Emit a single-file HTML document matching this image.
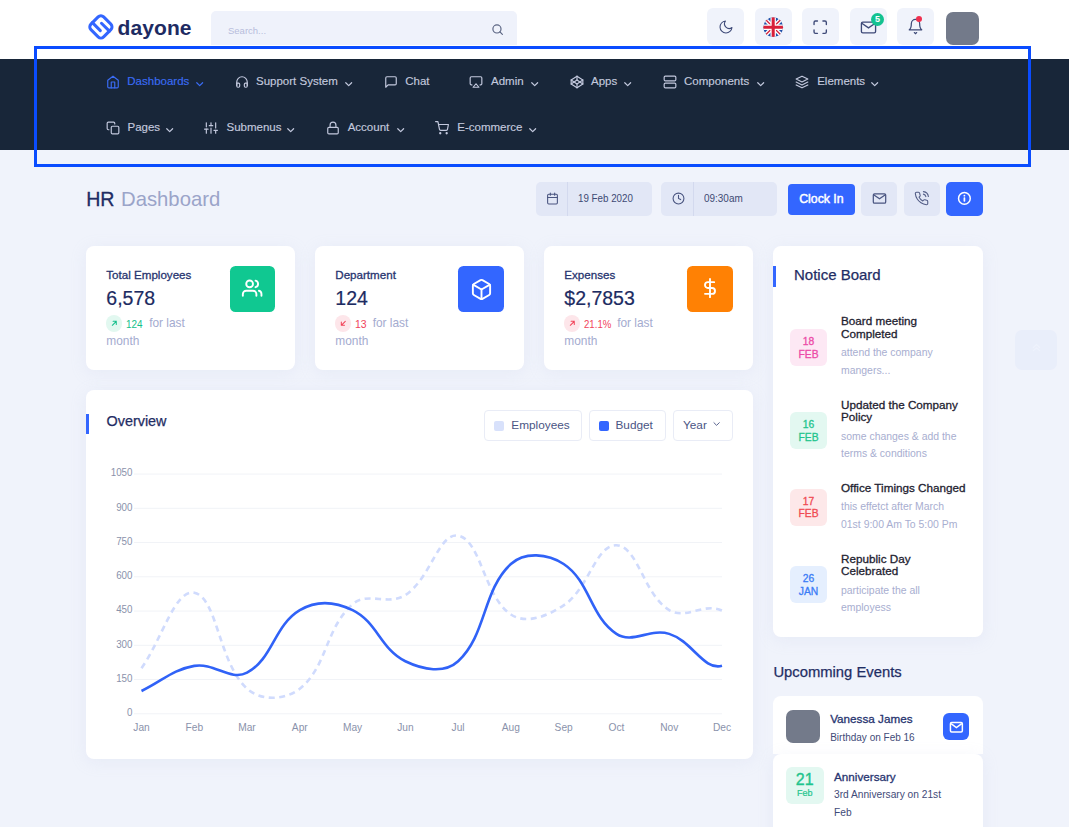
<!DOCTYPE html>
<html><head><meta charset="utf-8"><title>dayone HR Dashboard</title>
<style>
html,body{margin:0;padding:0}
body{width:1069px;height:827px;overflow:hidden;position:relative;background:#f0f3fb;font-family:"Liberation Sans",sans-serif}
.t{position:absolute;white-space:nowrap;line-height:1;font-family:"Liberation Sans",sans-serif}
.i{position:absolute;overflow:visible}
</style></head><body>
<div class="t" style="left:86.2px;top:189.6px;font-size:19.6px;color:#1f2d64;font-weight:normal;-webkit-text-stroke:0.3px #1f2d64;">HR</div>
<div class="t" style="left:121.0px;top:189.0px;font-size:20.3px;color:#9ba4c9;font-weight:normal;">Dashboard</div>
<div style="position:absolute;left:536px;top:182px;width:116px;height:34px;background:#e2e7f6;border-radius:5px"></div>
<div style="position:absolute;left:567px;top:182px;width:1px;height:34px;background:#d3d9ee"></div>
<svg class="i" style="left:546.0px;top:192.0px;width:13px;height:13px;" viewBox="0 0 24 24"><g fill="none" stroke="#4a5580" stroke-width="2" stroke-linecap="round"><rect x="3" y="4" width="18" height="18" rx="2"/><line x1="16" y1="2" x2="16" y2="6"/><line x1="8" y1="2" x2="8" y2="6"/><line x1="3" y1="10" x2="21" y2="10"/></g></svg>
<div class="t" style="left:577.5px;top:192.9px;font-size:11.3px;color:#3e4a74;font-weight:normal;transform:scaleX(0.865);transform-origin:0 0;">19 Feb 2020</div>
<div style="position:absolute;left:661px;top:182px;width:116px;height:34px;background:#e2e7f6;border-radius:5px"></div>
<div style="position:absolute;left:693px;top:182px;width:1px;height:34px;background:#d3d9ee"></div>
<svg class="i" style="left:671.5px;top:192.0px;width:13px;height:13px;" viewBox="0 0 24 24"><g fill="none" stroke="#4a5580" stroke-width="2" stroke-linecap="round"><circle cx="12" cy="12" r="10"/><polyline points="12 6 12 12 16 14"/></g></svg>
<div class="t" style="left:703.8px;top:192.9px;font-size:11.3px;color:#3e4a74;font-weight:normal;transform:scaleX(0.88);transform-origin:0 0;">09:30am</div>
<div style="position:absolute;left:788px;top:184px;width:67px;height:30.7px;background:#3366ff;border-radius:4px"></div>
<div class="t" style="left:799.2px;top:192.5px;font-size:12.3px;color:#ffffff;font-weight:normal;-webkit-text-stroke:0.45px #fff;">Clock In</div>
<div style="position:absolute;left:861px;top:182px;width:36px;height:34px;background:#e2e7f6;border-radius:5px"></div>
<svg class="i" style="left:871.5px;top:191.7px;width:15px;height:13px;" viewBox="0 0 24 21"><rect x="2" y="3" width="20" height="15" rx="2" fill="none" stroke="#4a5580" stroke-width="2"/><path d="M2.5 4.5 L12 11 L21.5 4.5" fill="none" stroke="#4a5580" stroke-width="2"/></svg>
<div style="position:absolute;left:903.5px;top:182px;width:36px;height:34px;background:#e2e7f6;border-radius:5px"></div>
<svg class="i" style="left:914.0px;top:191.0px;width:15px;height:15px;" viewBox="0 0 24 24"><g fill="none" stroke="#525c85" stroke-width="1.7" stroke-linecap="round" stroke-linejoin="round"><path d="M15.05 5A5 5 0 0 1 19 8.95M15.05 1A9 9 0 0 1 23 8.94m-1 7.98v3a2 2 0 0 1-2.18 2 19.79 19.79 0 0 1-8.63-3.07 19.5 19.5 0 0 1-6-6 19.79 19.79 0 0 1-3.07-8.67A2 2 0 0 1 4.11 2h3a2 2 0 0 1 2 1.72 12.84 12.84 0 0 0 .7 2.81 2 2 0 0 1-.45 2.11L8.09 9.91a16 16 0 0 0 6 6l1.27-1.27a2 2 0 0 1 2.11-.45 12.84 12.84 0 0 0 2.81.7A2 2 0 0 1 22 16.92z"/></g></svg>
<div style="position:absolute;left:946px;top:182px;width:36.5px;height:34px;background:#3366ff;border-radius:5px"></div>
<svg class="i" style="left:956.6px;top:191.0px;width:14.8px;height:14.8px;" viewBox="0 0 24 24"><circle cx="12" cy="12" r="9.5" fill="none" stroke="#fff" stroke-width="2.4"/><circle cx="12" cy="7.6" r="1.5" fill="#fff"/><rect x="10.6" y="10.3" width="2.8" height="7" rx="1" fill="#fff"/></svg>
<div style="position:absolute;left:1015px;top:330px;width:42px;height:40px;background:#e9eefa;border-radius:7px"></div>
<svg class="i" style="left:1031.5px;top:342.5px;width:9px;height:9px;" viewBox="0 0 10 10"><path d="M1.5 5 L5 1.8 L8.5 5 M1.5 8.5 L5 5.3 L8.5 8.5" fill="none" stroke="#eef2fc" stroke-width="1.3" stroke-linecap="round"/></svg>
<div style="position:absolute;left:86px;top:246px;width:209px;height:124px;background:#fff;border-radius:8px;box-shadow:0 3px 16px rgba(185,195,228,0.17)"></div>
<div class="t" style="left:106.3px;top:268.9px;font-size:11.6px;color:#283570;font-weight:normal;-webkit-text-stroke:0.3px #283570;">Total Employees</div>
<div class="t" style="left:106.3px;top:288.5px;font-size:19.5px;color:#1c2b62;font-weight:normal;-webkit-text-stroke:0.2px #1c2b62;">6,578</div>
<div style="position:absolute;left:229.6px;top:266px;width:45.8px;height:45.8px;background:#10c891;border-radius:5.5px"></div>
<svg class="i" style="left:242.3px;top:278.1px;width:20.3px;height:20.3px;" viewBox="0 0 24 24"><g fill="none" stroke="#fff" stroke-width="2.25" stroke-linecap="round" stroke-linejoin="round"><path d="M17 21v-2a4 4 0 0 0-4-4H5a4 4 0 0 0-4 4v2"/><circle cx="9" cy="7" r="4"/><path d="M23 21v-2a4 4 0 0 0-3-3.87"/><path d="M16 3.13a4 4 0 0 1 0 7.75"/></g></svg>
<div style="position:absolute;left:105.6px;top:315.3px;width:16.4px;height:16.4px;background:#e2f8f0;border-radius:50%"></div>
<svg class="i" style="left:110.6px;top:320.3px;width:6.6px;height:6.6px;" viewBox="0 0 10 10"><path d="M2 8 L8 2 M3.2 2 H8 V6.8" fill="none" stroke="#13bf8a" stroke-width="1.55" stroke-linecap="round"/></svg>
<div class="t" style="left:126.2px;top:318.8px;font-size:11px;color:#13bf8a;font-weight:normal;transform:scaleX(0.9);transform-origin:0 0;">124</div>
<div class="t" style="left:149.2px;top:317.9px;font-size:11.9px;color:#a4abcf;font-weight:normal;">for last</div>
<div class="t" style="left:106.3px;top:335.9px;font-size:11.9px;color:#a4abcf;font-weight:normal;">month</div>
<div style="position:absolute;left:315px;top:246px;width:209px;height:124px;background:#fff;border-radius:8px;box-shadow:0 3px 16px rgba(185,195,228,0.17)"></div>
<div class="t" style="left:335.3px;top:268.9px;font-size:11.6px;color:#283570;font-weight:normal;-webkit-text-stroke:0.3px #283570;">Department</div>
<div class="t" style="left:335.3px;top:288.5px;font-size:19.5px;color:#1c2b62;font-weight:normal;-webkit-text-stroke:0.2px #1c2b62;">124</div>
<div style="position:absolute;left:458.4px;top:266px;width:45.8px;height:45.8px;background:#3366ff;border-radius:5.5px"></div>
<svg class="i" style="left:469.8px;top:277.5px;width:23px;height:23px;" viewBox="0 0 24 24"><g fill="none" stroke="#fff" stroke-width="1.98" stroke-linecap="round" stroke-linejoin="round"><path d="M21 16V8a2 2 0 0 0-1-1.73l-7-4a2 2 0 0 0-2 0l-7 4A2 2 0 0 0 3 8v8a2 2 0 0 0 1 1.73l7 4a2 2 0 0 0 2 0l7-4A2 2 0 0 0 21 16z"/><polyline points="3.27 6.96 12 12.01 20.73 6.96"/><line x1="12" y1="22.08" x2="12" y2="12"/></g></svg>
<div style="position:absolute;left:334.6px;top:315.3px;width:16.4px;height:16.4px;background:#fde6ea;border-radius:50%"></div>
<svg class="i" style="left:339.6px;top:320.3px;width:6.6px;height:6.6px;" viewBox="0 0 10 10"><path d="M8 2 L2 8 M2 3.2 V8 H6.8" fill="none" stroke="#f1445a" stroke-width="1.55" stroke-linecap="round"/></svg>
<div class="t" style="left:355.2px;top:318.8px;font-size:11px;color:#f1445a;font-weight:normal;transform:scaleX(0.95);transform-origin:0 0;">13</div>
<div class="t" style="left:372.7px;top:317.9px;font-size:11.9px;color:#a4abcf;font-weight:normal;">for last</div>
<div class="t" style="left:335.3px;top:335.9px;font-size:11.9px;color:#a4abcf;font-weight:normal;">month</div>
<div style="position:absolute;left:544px;top:246px;width:209px;height:124px;background:#fff;border-radius:8px;box-shadow:0 3px 16px rgba(185,195,228,0.17)"></div>
<div class="t" style="left:564.3px;top:268.9px;font-size:11.6px;color:#283570;font-weight:normal;-webkit-text-stroke:0.3px #283570;">Expenses</div>
<div class="t" style="left:564.3px;top:288.5px;font-size:19.5px;color:#1c2b62;font-weight:normal;-webkit-text-stroke:0.2px #1c2b62;">$2,7853</div>
<div style="position:absolute;left:687.1px;top:266px;width:45.8px;height:45.8px;background:#ff8104;border-radius:5.5px"></div>
<svg class="i" style="left:700.0px;top:278.4px;width:20px;height:20px;" viewBox="0 0 24 24"><g fill="none" stroke="#fff" stroke-width="2.28" stroke-linecap="round" stroke-linejoin="round"><line x1="12" y1="1" x2="12" y2="23"/><path d="M17 5H9.5a3.5 3.5 0 0 0 0 7h5a3.5 3.5 0 0 1 0 7H6"/></g></svg>
<div style="position:absolute;left:563.6px;top:315.3px;width:16.4px;height:16.4px;background:#fde6ea;border-radius:50%"></div>
<svg class="i" style="left:568.6px;top:320.3px;width:6.6px;height:6.6px;" viewBox="0 0 10 10"><path d="M2 8 L8 2 M3.2 2 H8 V6.8" fill="none" stroke="#f1445a" stroke-width="1.55" stroke-linecap="round"/></svg>
<div class="t" style="left:584.2px;top:318.8px;font-size:11px;color:#f1445a;font-weight:normal;transform:scaleX(0.875);transform-origin:0 0;">21.1%</div>
<div class="t" style="left:617.2px;top:317.9px;font-size:11.9px;color:#a4abcf;font-weight:normal;">for last</div>
<div class="t" style="left:564.3px;top:335.9px;font-size:11.9px;color:#a4abcf;font-weight:normal;">month</div>
<div style="position:absolute;left:86px;top:390px;width:667px;height:369px;background:#fff;border-radius:8px;box-shadow:0 3px 16px rgba(185,195,228,0.17)"></div>
<div style="position:absolute;left:86px;top:413.5px;width:3px;height:20.5px;background:#3366ff"></div>
<div class="t" style="left:106.5px;top:414.4px;font-size:14.4px;color:#1f2d64;font-weight:normal;-webkit-text-stroke:0.25px #1f2d64;">Overview</div>
<div style="position:absolute;left:483.5px;top:410.3px;width:98px;height:31px;box-sizing:border-box;border:1px solid #e9ecf6;border-radius:4px;background:#fff"></div>
<div style="position:absolute;left:494px;top:421px;width:10px;height:10px;background:#d8e1fb;border-radius:2px"></div>
<div class="t" style="left:511.3px;top:420.3px;font-size:11.8px;color:#4a5584;font-weight:normal;">Employees</div>
<div style="position:absolute;left:588.5px;top:410.3px;width:77px;height:31px;box-sizing:border-box;border:1px solid #e9ecf6;border-radius:4px;background:#fff"></div>
<div style="position:absolute;left:599px;top:421px;width:10px;height:10px;background:#3366ff;border-radius:2px"></div>
<div class="t" style="left:615.5px;top:420.3px;font-size:11.8px;color:#4a5584;font-weight:normal;">Budget</div>
<div style="position:absolute;left:672.5px;top:410.3px;width:60px;height:31px;box-sizing:border-box;border:1px solid #e9ecf6;border-radius:4px;background:#fff"></div>
<div class="t" style="left:683.0px;top:420.3px;font-size:11.8px;color:#4a5584;font-weight:normal;">Year</div>
<svg class="i" style="left:712.8px;top:422.3px;width:7.2px;height:4.2px;" viewBox="0 0 8 5"><path d="M0.8 0.8 L4 4 L7.2 0.8" fill="none" stroke="#4a5584" stroke-width="1.1" stroke-linecap="round" stroke-linejoin="round"/></svg>
<svg class="i" style="left:0;top:0;width:1069px;height:827px" viewBox="0 0 1069 827"><line x1="134" y1="713.80" x2="722" y2="713.80" stroke="#f1f3f7" stroke-width="1"/><line x1="134" y1="679.55" x2="722" y2="679.55" stroke="#f1f3f7" stroke-width="1"/><line x1="134" y1="645.30" x2="722" y2="645.30" stroke="#f1f3f7" stroke-width="1"/><line x1="134" y1="611.05" x2="722" y2="611.05" stroke="#f1f3f7" stroke-width="1"/><line x1="134" y1="576.80" x2="722" y2="576.80" stroke="#f1f3f7" stroke-width="1"/><line x1="134" y1="542.55" x2="722" y2="542.55" stroke="#f1f3f7" stroke-width="1"/><line x1="134" y1="508.30" x2="722" y2="508.30" stroke="#f1f3f7" stroke-width="1"/><line x1="134" y1="474.05" x2="722" y2="474.05" stroke="#f1f3f7" stroke-width="1"/><path d="M141.50,668.13 C162.61,637.99 174.99,589.03 194.27,592.78 C217.21,597.25 218.56,662.80 247.04,688.68 C260.77,701.16 285.19,700.39 299.81,688.68 C327.41,666.59 325.13,628.55 352.58,604.20 C367.34,591.11 388.35,606.10 405.35,595.07 C430.57,578.70 438.88,532.16 458.12,535.70 C481.09,539.92 483.91,596.67 510.89,614.47 C526.13,624.53 546.72,616.44 563.66,605.34 C588.94,588.77 595.79,544.35 616.43,545.29 C638.01,546.27 643.32,594.12 669.20,610.14 C685.54,620.24 704.28,602.02 721.97,610.59" fill="none" stroke="#d0dbfd" stroke-width="2.6" stroke-dasharray="6 4.5"/><path d="M141.50,690.97 C162.61,680.92 172.17,669.67 194.27,665.85 C214.39,662.37 230.41,681.48 247.04,672.70 C272.62,659.19 274.14,625.35 299.81,610.14 C316.36,600.33 334.94,601.59 352.58,610.14 C377.15,622.04 380.78,649.38 405.35,661.28 C422.99,669.83 444.49,673.85 458.12,661.28 C486.71,634.94 482.30,590.36 510.89,564.01 C524.52,551.45 547.78,553.50 563.66,564.01 C590.00,581.45 590.09,616.45 616.43,633.88 C632.31,644.39 649.74,627.99 669.20,633.88 C691.95,640.78 703.74,670.98 721.97,665.85" fill="none" stroke="#3062f7" stroke-width="2.6"/></svg>
<div class="t" style="left:80px;width:52.5px;text-align:right;top:708.1px;font-size:10.2px;color:#8a92ab;transform:scaleX(0.96);transform-origin:100% 0">0</div>
<div class="t" style="left:80px;width:52.5px;text-align:right;top:673.9px;font-size:10.2px;color:#8a92ab;transform:scaleX(0.96);transform-origin:100% 0">150</div>
<div class="t" style="left:80px;width:52.5px;text-align:right;top:639.6px;font-size:10.2px;color:#8a92ab;transform:scaleX(0.96);transform-origin:100% 0">300</div>
<div class="t" style="left:80px;width:52.5px;text-align:right;top:605.4px;font-size:10.2px;color:#8a92ab;transform:scaleX(0.96);transform-origin:100% 0">450</div>
<div class="t" style="left:80px;width:52.5px;text-align:right;top:571.1px;font-size:10.2px;color:#8a92ab;transform:scaleX(0.96);transform-origin:100% 0">600</div>
<div class="t" style="left:80px;width:52.5px;text-align:right;top:536.9px;font-size:10.2px;color:#8a92ab;transform:scaleX(0.96);transform-origin:100% 0">750</div>
<div class="t" style="left:80px;width:52.5px;text-align:right;top:502.6px;font-size:10.2px;color:#8a92ab;transform:scaleX(0.96);transform-origin:100% 0">900</div>
<div class="t" style="left:80px;width:52.5px;text-align:right;top:468.4px;font-size:10.2px;color:#8a92ab;transform:scaleX(0.96);transform-origin:100% 0">1050</div>
<div class="t" style="left:116.5px;width:50px;text-align:center;top:722.5px;font-size:10.2px;color:#8a92ab">Jan</div>
<div class="t" style="left:169.3px;width:50px;text-align:center;top:722.5px;font-size:10.2px;color:#8a92ab">Feb</div>
<div class="t" style="left:222.0px;width:50px;text-align:center;top:722.5px;font-size:10.2px;color:#8a92ab">Mar</div>
<div class="t" style="left:274.8px;width:50px;text-align:center;top:722.5px;font-size:10.2px;color:#8a92ab">Apr</div>
<div class="t" style="left:327.6px;width:50px;text-align:center;top:722.5px;font-size:10.2px;color:#8a92ab">May</div>
<div class="t" style="left:380.4px;width:50px;text-align:center;top:722.5px;font-size:10.2px;color:#8a92ab">Jun</div>
<div class="t" style="left:433.1px;width:50px;text-align:center;top:722.5px;font-size:10.2px;color:#8a92ab">Jul</div>
<div class="t" style="left:485.9px;width:50px;text-align:center;top:722.5px;font-size:10.2px;color:#8a92ab">Aug</div>
<div class="t" style="left:538.7px;width:50px;text-align:center;top:722.5px;font-size:10.2px;color:#8a92ab">Sep</div>
<div class="t" style="left:591.4px;width:50px;text-align:center;top:722.5px;font-size:10.2px;color:#8a92ab">Oct</div>
<div class="t" style="left:644.2px;width:50px;text-align:center;top:722.5px;font-size:10.2px;color:#8a92ab">Nov</div>
<div class="t" style="left:697.0px;width:50px;text-align:center;top:722.5px;font-size:10.2px;color:#8a92ab">Dec</div>
<div style="position:absolute;left:773px;top:246px;width:210px;height:391px;background:#fff;border-radius:8px;box-shadow:0 3px 16px rgba(185,195,228,0.17)"></div>
<div style="position:absolute;left:773px;top:266.2px;width:3px;height:20.6px;background:#3366ff"></div>
<div class="t" style="left:794.0px;top:266.8px;font-size:15px;color:#1f2d64;font-weight:normal;-webkit-text-stroke:0.25px #1f2d64;">Notice Board</div>
<div style="position:absolute;left:790px;top:329px;width:37px;height:37px;background:#fde8f4;border-radius:6px"></div>
<div class="t" style="left:790px;width:37px;text-align:center;top:337.1px;font-size:10.3px;color:#ec4aa7;-webkit-text-stroke:0.3px #ec4aa7">18</div>
<div class="t" style="left:790px;width:37px;text-align:center;top:349.7px;font-size:10.3px;color:#ec4aa7;-webkit-text-stroke:0.3px #ec4aa7">FEB</div>
<div class="t" style="left:841.0px;top:315.3px;font-size:11.7px;color:#1e2230;font-weight:normal;-webkit-text-stroke:0.3px #1e2230;">Board meeting</div>
<div class="t" style="left:841.0px;top:328.0px;font-size:11.7px;color:#1e2230;font-weight:normal;-webkit-text-stroke:0.3px #1e2230;">Completed</div>
<div class="t" style="left:841.0px;top:348.4px;font-size:10.45px;color:#a8aed0;font-weight:normal;">attend the company</div>
<div class="t" style="left:841.0px;top:365.8px;font-size:10.45px;color:#a8aed0;font-weight:normal;">mangers...</div>
<div style="position:absolute;left:790px;top:412px;width:37px;height:37px;background:#e3f8f1;border-radius:6px"></div>
<div class="t" style="left:790px;width:37px;text-align:center;top:420.1px;font-size:10.3px;color:#1fc48d;-webkit-text-stroke:0.3px #1fc48d">16</div>
<div class="t" style="left:790px;width:37px;text-align:center;top:432.7px;font-size:10.3px;color:#1fc48d;-webkit-text-stroke:0.3px #1fc48d">FEB</div>
<div class="t" style="left:841.0px;top:398.6px;font-size:11.7px;color:#1e2230;font-weight:normal;-webkit-text-stroke:0.3px #1e2230;">Updated the Company</div>
<div class="t" style="left:841.0px;top:411.3px;font-size:11.7px;color:#1e2230;font-weight:normal;-webkit-text-stroke:0.3px #1e2230;">Policy</div>
<div class="t" style="left:841.0px;top:431.7px;font-size:10.45px;color:#a8aed0;font-weight:normal;">some changes &amp; add the</div>
<div class="t" style="left:841.0px;top:449.1px;font-size:10.45px;color:#a8aed0;font-weight:normal;">terms &amp; conditions</div>
<div style="position:absolute;left:790px;top:488.5px;width:37px;height:37px;background:#fde8e9;border-radius:6px"></div>
<div class="t" style="left:790px;width:37px;text-align:center;top:496.6px;font-size:10.3px;color:#f04a52;-webkit-text-stroke:0.3px #f04a52">17</div>
<div class="t" style="left:790px;width:37px;text-align:center;top:509.2px;font-size:10.3px;color:#f04a52;-webkit-text-stroke:0.3px #f04a52">FEB</div>
<div class="t" style="left:841.0px;top:481.7px;font-size:11.7px;color:#1e2230;font-weight:normal;-webkit-text-stroke:0.3px #1e2230;">Office Timings Changed</div>
<div class="t" style="left:841.0px;top:502.1px;font-size:10.45px;color:#a8aed0;font-weight:normal;">this effetct after March</div>
<div class="t" style="left:841.0px;top:519.5px;font-size:10.45px;color:#a8aed0;font-weight:normal;">01st 9:00 Am To 5:00 Pm</div>
<div style="position:absolute;left:790px;top:566px;width:37px;height:37px;background:#e5effe;border-radius:6px"></div>
<div class="t" style="left:790px;width:37px;text-align:center;top:574.1px;font-size:10.3px;color:#3b7cf6;-webkit-text-stroke:0.3px #3b7cf6">26</div>
<div class="t" style="left:790px;width:37px;text-align:center;top:586.7px;font-size:10.3px;color:#3b7cf6;-webkit-text-stroke:0.3px #3b7cf6">JAN</div>
<div class="t" style="left:841.0px;top:552.6px;font-size:11.7px;color:#1e2230;font-weight:normal;-webkit-text-stroke:0.3px #1e2230;">Republic Day</div>
<div class="t" style="left:841.0px;top:565.3px;font-size:11.7px;color:#1e2230;font-weight:normal;-webkit-text-stroke:0.3px #1e2230;">Celebrated</div>
<div class="t" style="left:841.0px;top:585.7px;font-size:10.45px;color:#a8aed0;font-weight:normal;">participate the all</div>
<div class="t" style="left:841.0px;top:603.1px;font-size:10.45px;color:#a8aed0;font-weight:normal;">employess</div>
<div class="t" style="left:773.4px;top:664.9px;font-size:14.8px;color:#1f2d64;font-weight:normal;-webkit-text-stroke:0.25px #1f2d64;">Upcomming Events</div>
<div style="position:absolute;left:773px;top:696.3px;width:210px;height:57.7px;background:#fff;border-radius:8px 8px 0 0"></div>
<div style="position:absolute;left:786px;top:710px;width:33.5px;height:33px;background:#737a8a;border-radius:7px"></div>
<div class="t" style="left:830.2px;top:713.3px;font-size:11.7px;color:#283570;font-weight:normal;-webkit-text-stroke:0.3px #283570;">Vanessa James</div>
<div class="t" style="left:830.2px;top:733.1px;font-size:10px;color:#3f4b78;font-weight:normal;">Birthday on Feb 16</div>
<div style="position:absolute;left:943px;top:713px;width:26.2px;height:26.6px;background:#3366ff;border-radius:6px"></div>
<svg class="i" style="left:948.6px;top:720.6px;width:14.8px;height:12.5px;" viewBox="0 0 24 21"><rect x="2" y="2.5" width="20" height="16" rx="2" fill="none" stroke="#fff" stroke-width="2.5"/><path d="M3 4.5 L12 11 L21 4.5" fill="none" stroke="#fff" stroke-width="2.6"/></svg>
<div style="position:absolute;left:773px;top:754.3px;width:210px;height:90px;background:#fff;border-radius:8px;box-shadow:0 3px 16px rgba(185,195,228,0.17)"></div>
<div style="position:absolute;left:786px;top:767px;width:37.5px;height:37px;background:#e3f8f1;border-radius:6px"></div>
<div class="t" style="left:786px;width:37.5px;text-align:center;top:772.4px;font-size:16px;color:#1fc48d;-webkit-text-stroke:0.35px #1fc48d">21</div>
<div class="t" style="left:786px;width:37.5px;text-align:center;top:788.8px;font-size:9px;color:#1fc48d;-webkit-text-stroke:0.2px #1fc48d">Feb</div>
<div class="t" style="left:834.0px;top:770.7px;font-size:11.7px;color:#283570;font-weight:normal;-webkit-text-stroke:0.3px #283570;">Anniversary</div>
<div class="t" style="left:834.0px;top:790.3px;font-size:10.2px;color:#3f4b78;font-weight:normal;">3rd Anniversary on 21st</div>
<div class="t" style="left:834.0px;top:807.6px;font-size:10.2px;color:#3f4b78;font-weight:normal;">Feb</div>
<div style="position:absolute;left:0;top:0;width:1069px;height:59px;background:#fff"></div>
<svg class="i" style="left:85.0px;top:11.0px;width:32px;height:32px;" viewBox="0 0 32 32"><g transform="translate(15.9 15.9) rotate(45)" fill="none" stroke="#3366ff" stroke-width="3.0" stroke-linecap="round"><rect x="-9" y="-9" width="18" height="18" rx="3.9"/><path d="M-9 3 H2.2 M9 -3 H-2.2"/></g></svg>
<div class="t" style="left:117.5px;top:16.7px;font-size:21px;color:#1e2b62;font-weight:bold;letter-spacing:0.1px;">dayone</div>
<div style="position:absolute;left:211px;top:11px;width:306px;height:33.8px;background:#eff2fb;border-radius:5px 5px 0 0"></div>
<div class="t" style="left:228.0px;top:26.0px;font-size:9.5px;color:#b7bddb;font-weight:normal;">Search...</div>
<svg class="i" style="left:490.5px;top:22.5px;width:13px;height:13px;" viewBox="0 0 24 24"><circle cx="11" cy="11" r="7.5" fill="none" stroke="#5b6583" stroke-width="2.2"/><path d="M16.5 16.5 L21 21" stroke="#5b6583" stroke-width="2.2" stroke-linecap="round"/></svg>
<div style="position:absolute;left:707px;top:8px;width:37px;height:37px;background:#f0f3fb;border-radius:6px"></div>
<div style="position:absolute;left:755px;top:8px;width:37px;height:37px;background:#f0f3fb;border-radius:6px"></div>
<div style="position:absolute;left:802px;top:8px;width:37px;height:37px;background:#f0f3fb;border-radius:6px"></div>
<div style="position:absolute;left:850px;top:8px;width:37px;height:37px;background:#f0f3fb;border-radius:6px"></div>
<div style="position:absolute;left:897px;top:8px;width:37px;height:37px;background:#f0f3fb;border-radius:6px"></div>
<svg class="i" style="left:717.5px;top:18.5px;width:16px;height:16px;" viewBox="0 0 24 24"><path d="M21 12.79A9 9 0 1 1 11.21 3 7 7 0 0 0 21 12.79z" fill="none" stroke="#3e4a78" stroke-width="1.6" stroke-linejoin="round"/></svg>
<svg class="i" style="left:762.8px;top:17.0px;width:20.4px;height:20.4px;" viewBox="0 0 60 60"><defs><clipPath id="fc"><circle cx="30" cy="30" r="29"/></clipPath></defs><g clip-path="url(#fc)"><rect width="60" height="60" fill="#1f4fa8"/><path d="M0 0 L60 60 M60 0 L0 60" stroke="#fff" stroke-width="12"/><path d="M0 0 L60 60 M60 0 L0 60" stroke="#d8203a" stroke-width="4"/><path d="M30 0 V60 M0 30 H60" stroke="#fff" stroke-width="16"/><path d="M30 0 V60 M0 30 H60" stroke="#d8203a" stroke-width="9"/></g></svg>
<svg class="i" style="left:812.3px;top:18.8px;width:16.4px;height:16.4px;" viewBox="0 0 24 24"><path d="M3 8V5a2 2 0 0 1 2-2h3M16 3h3a2 2 0 0 1 2 2v3M21 16v3a2 2 0 0 1-2 2h-3M8 21H5a2 2 0 0 1-2-2v-3" fill="none" stroke="#3e4a78" stroke-width="2" stroke-linecap="round"/></svg>
<svg class="i" style="left:859.5px;top:20.0px;width:17px;height:15px;" viewBox="0 0 24 21"><rect x="2" y="3" width="20" height="15" rx="2" fill="none" stroke="#3e4a78" stroke-width="1.9"/><path d="M2.5 4.5 L12 11 L21.5 4.5" fill="none" stroke="#3e4a78" stroke-width="1.9"/></svg>
<div style="position:absolute;left:871px;top:12.5px;width:13px;height:13px;border-radius:50%;background:#13c290;color:#fff;font:bold 9px/13px 'Liberation Sans',sans-serif;text-align:center">5</div>
<svg class="i" style="left:906.5px;top:17.0px;width:17px;height:18px;" viewBox="0 0 24 26"><path d="M18 9.5a6 6 0 0 0-12 0c0 7-3 9-3 9h18s-3-2-3-9" fill="none" stroke="#3e4a78" stroke-width="1.8" stroke-linejoin="round"/><path d="M10.3 22.5 L12 24 L13.7 22.5" fill="none" stroke="#3e4a78" stroke-width="1.8" stroke-linecap="round"/></svg>
<div style="position:absolute;left:916.3px;top:16.2px;width:6.2px;height:6.2px;border-radius:50%;background:#f0304f"></div>
<div style="position:absolute;left:946px;top:12px;width:33px;height:33px;background:#737a8a;border-radius:7px"></div>
<div style="position:absolute;left:0;top:59px;width:1069px;height:91.3px;background:#182639"></div>
<svg class="i" style="left:105.5px;top:74.9px;width:14px;height:14px;" viewBox="0 0 24 24"><g fill="none" stroke="#3a6cf5" stroke-width="2" stroke-linecap="round" stroke-linejoin="round"><path d="M3 9l9-7 9 7v11a2 2 0 0 1-2 2H5a2 2 0 0 1-2-2z"/><polyline points="9 22 9 12 15 12 15 22"/></g></svg>
<div class="t" style="left:127.3px;top:76.4px;font-size:11.5px;color:#3a6cf5;font-weight:normal;-webkit-text-stroke:0.15px #3a6cf5;">Dashboards</div>
<svg class="i" style="left:195.5px;top:81.8px;width:7.4px;height:4.6px;" viewBox="0 0 8 5"><path d="M0.8 0.8 L4 4 L7.2 0.8" fill="none" stroke="#3a6cf5" stroke-width="1.3" stroke-linecap="round" stroke-linejoin="round"/></svg>
<svg class="i" style="left:234.5px;top:74.9px;width:14px;height:14px;" viewBox="0 0 24 24"><g fill="none" stroke="#c3c9de" stroke-width="2" stroke-linecap="round" stroke-linejoin="round"><path d="M3 18v-6a9 9 0 0 1 18 0v6"/><path d="M21 19a2 2 0 0 1-2 2h-1a2 2 0 0 1-2-2v-3a2 2 0 0 1 2-2h3zM3 19a2 2 0 0 0 2 2h1a2 2 0 0 0 2-2v-3a2 2 0 0 0-2-2H3z"/></g></svg>
<div class="t" style="left:256.0px;top:76.4px;font-size:11.5px;color:#c3c9de;font-weight:normal;-webkit-text-stroke:0.15px #c3c9de;">Support System</div>
<svg class="i" style="left:344.8px;top:81.8px;width:7.4px;height:4.6px;" viewBox="0 0 8 5"><path d="M0.8 0.8 L4 4 L7.2 0.8" fill="none" stroke="#c3c9de" stroke-width="1.3" stroke-linecap="round" stroke-linejoin="round"/></svg>
<svg class="i" style="left:383.5px;top:74.9px;width:14px;height:14px;" viewBox="0 0 24 24"><g fill="none" stroke="#c3c9de" stroke-width="2" stroke-linecap="round" stroke-linejoin="round"><path d="M21 15a2 2 0 0 1-2 2H7l-4 4V5a2 2 0 0 1 2-2h14a2 2 0 0 1 2 2z"/></g></svg>
<div class="t" style="left:405.2px;top:76.4px;font-size:11.5px;color:#c3c9de;font-weight:normal;-webkit-text-stroke:0.15px #c3c9de;">Chat</div>
<svg class="i" style="left:469.3px;top:74.9px;width:14px;height:14px;" viewBox="0 0 24 24"><g fill="none" stroke="#c3c9de" stroke-width="2" stroke-linecap="round" stroke-linejoin="round"><path d="M5 17H4a2 2 0 0 1-2-2V5a2 2 0 0 1 2-2h16a2 2 0 0 1 2 2v10a2 2 0 0 1-2 2h-1"/><polygon points="12 15 17 21 7 21 12 15"/></g></svg>
<div class="t" style="left:491.0px;top:76.4px;font-size:11.5px;color:#c3c9de;font-weight:normal;-webkit-text-stroke:0.15px #c3c9de;">Admin</div>
<svg class="i" style="left:531.0px;top:81.8px;width:7.4px;height:4.6px;" viewBox="0 0 8 5"><path d="M0.8 0.8 L4 4 L7.2 0.8" fill="none" stroke="#c3c9de" stroke-width="1.3" stroke-linecap="round" stroke-linejoin="round"/></svg>
<svg class="i" style="left:569.5px;top:74.9px;width:14px;height:14px;" viewBox="0 0 24 24"><g fill="none" stroke="#c3c9de" stroke-width="2" stroke-linecap="round" stroke-linejoin="round"><polygon points="12 2 22 8.5 22 15.5 12 22 2 15.5 2 8.5 12 2"/><line x1="12" y1="22" x2="12" y2="15.5"/><polyline points="22 8.5 12 15.5 2 8.5"/><polyline points="2 15.5 12 8.5 22 15.5"/><line x1="12" y1="2" x2="12" y2="8.5"/></g></svg>
<div class="t" style="left:591.0px;top:76.4px;font-size:11.5px;color:#c3c9de;font-weight:normal;-webkit-text-stroke:0.15px #c3c9de;">Apps</div>
<svg class="i" style="left:624.2px;top:81.8px;width:7.4px;height:4.6px;" viewBox="0 0 8 5"><path d="M0.8 0.8 L4 4 L7.2 0.8" fill="none" stroke="#c3c9de" stroke-width="1.3" stroke-linecap="round" stroke-linejoin="round"/></svg>
<svg class="i" style="left:662.5px;top:74.9px;width:14px;height:14px;" viewBox="0 0 24 24"><g fill="none" stroke="#c3c9de" stroke-width="2" stroke-linecap="round" stroke-linejoin="round"><rect x="2" y="2" width="20" height="8" rx="2" ry="2"/><rect x="2" y="14" width="20" height="8" rx="2" ry="2"/></g></svg>
<div class="t" style="left:684.0px;top:76.4px;font-size:11.5px;color:#c3c9de;font-weight:normal;-webkit-text-stroke:0.15px #c3c9de;">Components</div>
<svg class="i" style="left:756.6px;top:81.8px;width:7.4px;height:4.6px;" viewBox="0 0 8 5"><path d="M0.8 0.8 L4 4 L7.2 0.8" fill="none" stroke="#c3c9de" stroke-width="1.3" stroke-linecap="round" stroke-linejoin="round"/></svg>
<svg class="i" style="left:795.3px;top:74.9px;width:14px;height:14px;" viewBox="0 0 24 24"><g fill="none" stroke="#c3c9de" stroke-width="2" stroke-linecap="round" stroke-linejoin="round"><polygon points="12 2 2 7 12 12 22 7 12 2"/><polyline points="2 17 12 22 22 17"/><polyline points="2 12 12 17 22 12"/></g></svg>
<div class="t" style="left:817.2px;top:76.4px;font-size:11.5px;color:#c3c9de;font-weight:normal;-webkit-text-stroke:0.15px #c3c9de;">Elements</div>
<svg class="i" style="left:871.3px;top:81.8px;width:7.4px;height:4.6px;" viewBox="0 0 8 5"><path d="M0.8 0.8 L4 4 L7.2 0.8" fill="none" stroke="#c3c9de" stroke-width="1.3" stroke-linecap="round" stroke-linejoin="round"/></svg>
<svg class="i" style="left:105.5px;top:120.9px;width:14px;height:14px;" viewBox="0 0 24 24"><g fill="none" stroke="#c3c9de" stroke-width="2" stroke-linecap="round" stroke-linejoin="round"><rect x="9" y="9" width="13" height="13" rx="2" ry="2"/><path d="M5 15H4a2 2 0 0 1-2-2V4a2 2 0 0 1 2-2h9a2 2 0 0 1 2 2v1"/></g></svg>
<div class="t" style="left:127.5px;top:122.4px;font-size:11.5px;color:#c3c9de;font-weight:normal;-webkit-text-stroke:0.15px #c3c9de;">Pages</div>
<svg class="i" style="left:166.0px;top:127.8px;width:7.4px;height:4.6px;" viewBox="0 0 8 5"><path d="M0.8 0.8 L4 4 L7.2 0.8" fill="none" stroke="#c3c9de" stroke-width="1.3" stroke-linecap="round" stroke-linejoin="round"/></svg>
<svg class="i" style="left:204.3px;top:120.9px;width:14px;height:14px;" viewBox="0 0 24 24"><g fill="none" stroke="#c3c9de" stroke-width="2" stroke-linecap="round" stroke-linejoin="round"><line x1="4" y1="21" x2="4" y2="14"/><line x1="4" y1="10" x2="4" y2="3"/><line x1="12" y1="21" x2="12" y2="12"/><line x1="12" y1="8" x2="12" y2="3"/><line x1="20" y1="21" x2="20" y2="16"/><line x1="20" y1="12" x2="20" y2="3"/><line x1="1" y1="14" x2="7" y2="14"/><line x1="9" y1="8" x2="15" y2="8"/><line x1="17" y1="16" x2="23" y2="16"/></g></svg>
<div class="t" style="left:226.5px;top:122.4px;font-size:11.5px;color:#c3c9de;font-weight:normal;-webkit-text-stroke:0.15px #c3c9de;">Submenus</div>
<svg class="i" style="left:287.4px;top:127.8px;width:7.4px;height:4.6px;" viewBox="0 0 8 5"><path d="M0.8 0.8 L4 4 L7.2 0.8" fill="none" stroke="#c3c9de" stroke-width="1.3" stroke-linecap="round" stroke-linejoin="round"/></svg>
<svg class="i" style="left:326.3px;top:120.9px;width:14px;height:14px;" viewBox="0 0 24 24"><g fill="none" stroke="#c3c9de" stroke-width="2" stroke-linecap="round" stroke-linejoin="round"><rect x="3" y="11" width="18" height="11" rx="2" ry="2"/><path d="M7 11V7a5 5 0 0 1 10 0v4"/></g></svg>
<div class="t" style="left:347.7px;top:122.4px;font-size:11.5px;color:#c3c9de;font-weight:normal;-webkit-text-stroke:0.15px #c3c9de;">Account</div>
<svg class="i" style="left:397.0px;top:127.8px;width:7.4px;height:4.6px;" viewBox="0 0 8 5"><path d="M0.8 0.8 L4 4 L7.2 0.8" fill="none" stroke="#c3c9de" stroke-width="1.3" stroke-linecap="round" stroke-linejoin="round"/></svg>
<svg class="i" style="left:435.0px;top:120.9px;width:14px;height:14px;" viewBox="0 0 24 24"><g fill="none" stroke="#c3c9de" stroke-width="2" stroke-linecap="round" stroke-linejoin="round"><circle cx="9" cy="21" r="1"/><circle cx="20" cy="21" r="1"/><path d="M1 1h4l2.68 13.39a2 2 0 0 0 2 1.61h9.72a2 2 0 0 0 2-1.61L23 6H6"/></g></svg>
<div class="t" style="left:457.3px;top:122.4px;font-size:11.5px;color:#c3c9de;font-weight:normal;-webkit-text-stroke:0.15px #c3c9de;">E-commerce</div>
<svg class="i" style="left:528.6px;top:127.8px;width:7.4px;height:4.6px;" viewBox="0 0 8 5"><path d="M0.8 0.8 L4 4 L7.2 0.8" fill="none" stroke="#c3c9de" stroke-width="1.3" stroke-linecap="round" stroke-linejoin="round"/></svg>
<div style="position:absolute;left:34px;top:46px;width:991px;height:115px;border:3px solid #0a4cff"></div>
</body></html>
